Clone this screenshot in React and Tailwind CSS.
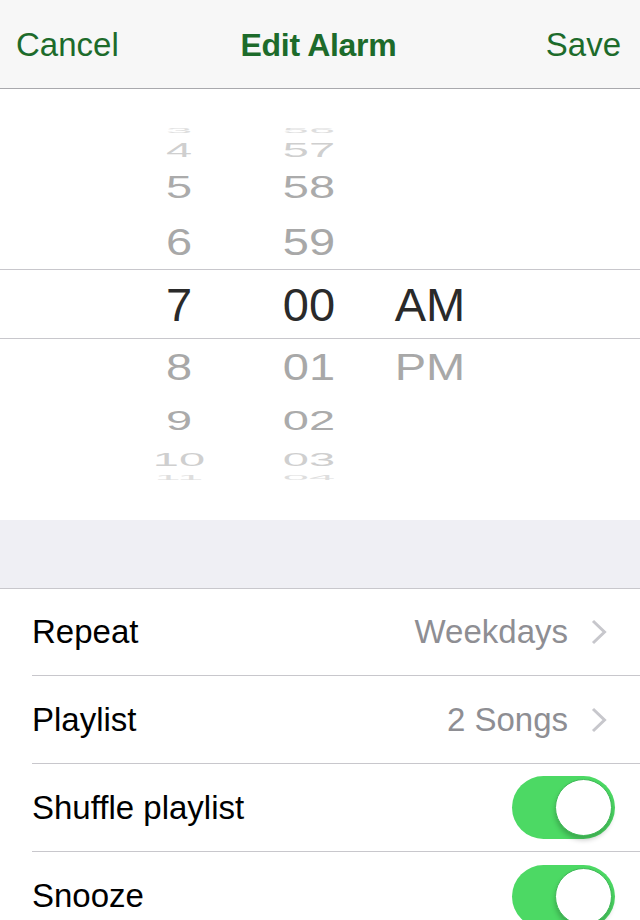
const GREEN = "text-[#1d6b2b]";

// picker drum rows, top to bottom
const pickerRows = [
  { h: "h-[18px]", hour: "3", min: "56", scale: "scale-y-[0.15]", color: "text-[#dedede]" },
  { h: "h-[21px]", hour: "4", min: "57", scale: "scale-y-[0.43]", color: "text-[#cfcfcf]" },
  { h: "h-[54px]", hour: "5", min: "58", scale: "scale-y-[0.66]", color: "text-[#ababab]" },
  { h: "h-[55px]", hour: "6", min: "59", scale: "scale-y-[0.8]", color: "text-[#a8a8a8]" },
  { h: "h-[70px]", hour: "7", min: "00", ampm: "AM", scale: "", color: "text-[#2a2a2a]", selected: true },
  { h: "h-[56px]", hour: "8", min: "01", ampm: "PM", scale: "scale-y-[0.78]", color: "text-[#a8a8a8]" },
  { h: "h-[50px]", hour: "9", min: "02", scale: "scale-y-[0.58]", color: "text-[#ababab]" },
  { h: "h-[28px]", hour: "10", min: "03", scale: "scale-y-[0.4]", color: "text-[#cfcfcf]" },
  { h: "h-[8px]", hour: "11", min: "04", scale: "scale-y-[0.15]", color: "text-[#dedede]" },
];

function Chevron() {
  return (
    <svg width="16" height="26" viewBox="0 0 16 26" className="shrink-0">
      <path d="M2 2 L13.5 13 L2 24" fill="none" stroke="#c7c7cc" strokeWidth="3" />
    </svg>
  );
}

function Toggle() {
  return (
    <div className="w-[103px] h-[63px] rounded-full bg-[#4cd964] flex items-center justify-end pr-[3px]">
      <div className="w-[57px] h-[57px] rounded-full bg-white border border-[#3fb957] shadow-[0_4px_5px_rgba(0,0,0,0.22)]"></div>
    </div>
  );
}

function Row({ label, value, toggle, last, first }) {
  return (
    <div className="pl-[32px] bg-white">
      <div
        className={`${first ? "h-[87px]" : "h-[88px]"} flex items-center pr-[25px] ${last ? "" : "border-b border-[#c8c7cc]"}`}
      >
        <span className="flex-1 text-[33px] text-black">{label}</span>
        {value && (
          <div className="flex items-center gap-[23px] pr-[8px]">
            <span className="text-[33px] text-[#8e8e93]">{value}</span>
            <Chevron />
          </div>
        )}
        {toggle && <Toggle />}
      </div>
    </div>
  );
}

export default function App() {
  return (
    <div className="w-[640px] h-[920px] overflow-hidden bg-white font-['Liberation_Sans',Arial,sans-serif]">
      {/* Nav bar */}
      <header className="h-[89px] bg-[#f7f7f7] border-b border-[#a9a9ad] grid grid-cols-[1fr_auto_1fr] items-center pl-[16px] pr-[19px] pt-[1px]">
        <span className={`text-[33px] ${GREEN}`}>Cancel</span>
        <span className={`text-[32px] font-bold tracking-[-0.3px] ${GREEN}`}>Edit Alarm</span>
        <span className={`text-[33px] text-right ${GREEN}`}>Save</span>
      </header>

      {/* Time picker */}
      <div className="h-[431px] overflow-hidden flex flex-col pt-[32px]">
        {pickerRows.map((r, i) => (
          <div
            key={i}
            className={`${r.h} shrink-0 flex items-center ${r.color} ${r.selected ? "border-y border-[#c8c7cc]" : ""}`}
          >
            <div className={`ml-[139px] w-[80px] text-center text-[47px] leading-none ${r.scale}`}>{r.hour}</div>
            <div className={`ml-[50px] w-[80px] text-center text-[47px] leading-none ${r.scale}`}>{r.min}</div>
            <div className={`ml-[31px] w-[100px] text-center text-[47px] leading-none ${r.scale}`}>{r.ampm}</div>
          </div>
        ))}
      </div>

      {/* Section gap */}
      <div className="h-[69px] bg-[#efeff4] border-b border-[#c8c7cc]"></div>

      {/* Settings list */}
      <Row label="Repeat" value="Weekdays" first />
      <Row label="Playlist" value="2 Songs" />
      <Row label="Shuffle playlist" toggle />
      <Row label="Snooze" toggle last />
    </div>
  );
}
